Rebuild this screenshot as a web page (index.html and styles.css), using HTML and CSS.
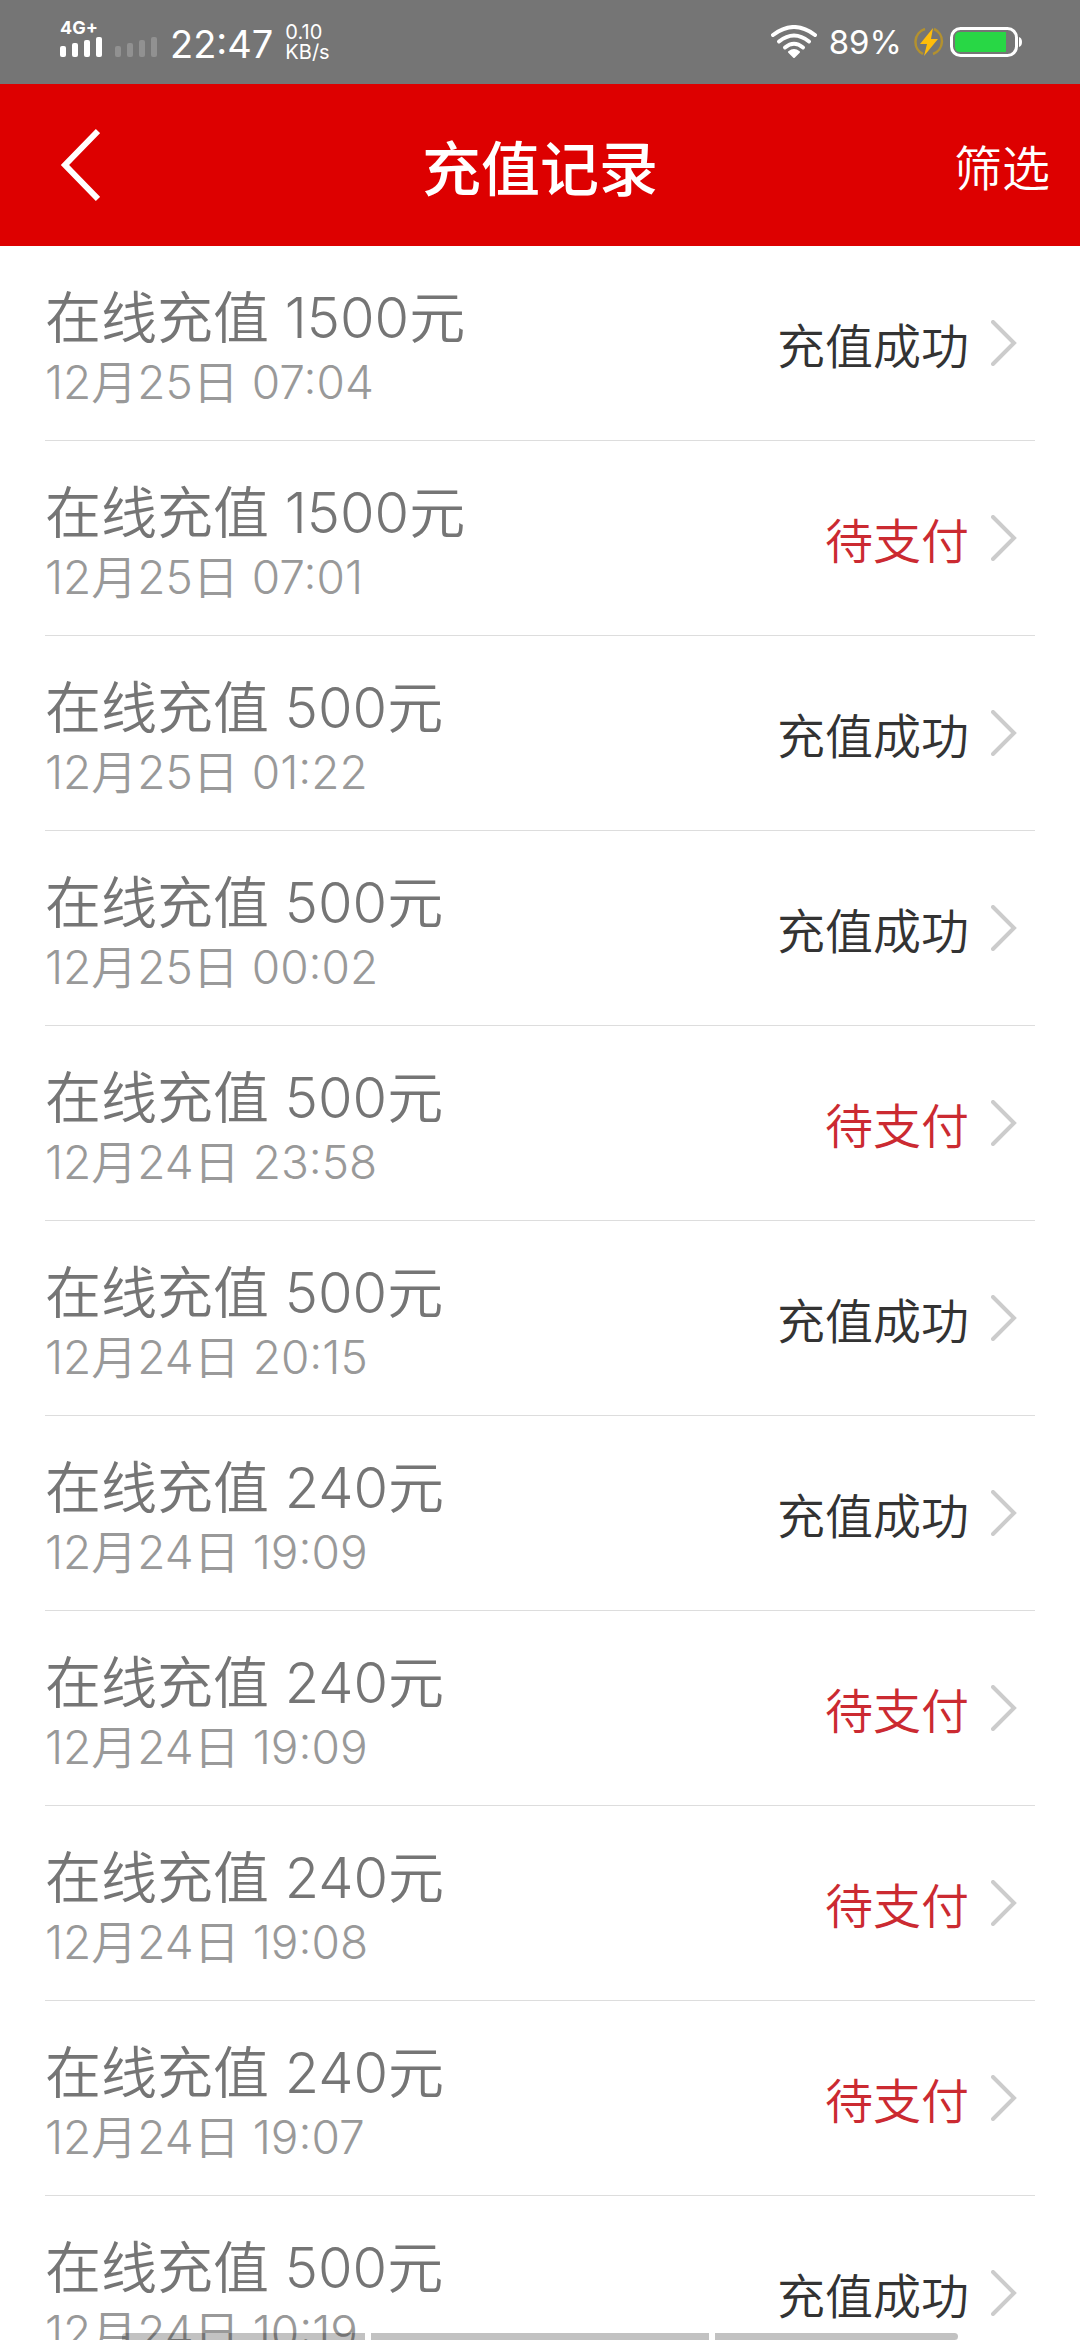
FILE: index.html
```html
<!DOCTYPE html>
<html lang="zh-CN">
<head>
  <meta charset="UTF-8" />
  <meta name="viewport" content="width=device-width, initial-scale=1" />
  <title>充值记录</title>
  <link rel="stylesheet" href="styles.css">
</head>
<body>
  <div class="status-bar">
    <div class="status-left">
      <div class="signal">
        <span class="network">4G+</span>
        <svg width="43" height="21" viewBox="0 0 43 21" fill="#fff">
          <rect x="0" y="10" width="6" height="11" rx="2"/>
          <rect x="12" y="7" width="6" height="14" rx="2"/>
          <rect x="24" y="4" width="6" height="17" rx="2"/>
          <rect x="36" y="1" width="6" height="20" rx="2"/>
        </svg>
      </div>
      <div class="signal">
        <svg width="43" height="21" viewBox="0 0 43 21" fill="#919191">
          <rect x="0" y="10" width="6" height="11" rx="2"/>
          <rect x="12" y="7" width="6" height="14" rx="2"/>
          <rect x="24" y="4" width="6" height="17" rx="2"/>
          <rect x="36" y="1" width="6" height="20" rx="2"/>
        </svg>
      </div>
      <span class="clock">22:47</span>
      <div class="speed"><span>0.10</span><span>KB/s</span></div>
    </div>
    <div class="status-right">
      <svg width="46" height="34" viewBox="0 0 46 34" fill="none" stroke="#fff" stroke-width="4" stroke-linecap="round">
        <path d="M2 10Q23 -6 44 10"/>
        <path d="M8 16.500Q23 4.500 38 16.500"/>
        <path d="M14 22.500Q23 15 32 22.500"/>
        <path d="M18 27Q23 23 28 27L23 32Z" fill="#fff" stroke-width="2" stroke-linejoin="round"/>
      </svg>
      <span class="percent">89%</span>
      <svg class="bolt" width="30" height="30" viewBox="0 0 30 30">
        <path d="M11 2A13.500 13.500 0 0 0 9 27M20 2A13.500 13.500 0 0 1 19 27" fill="none" stroke="#b3912f" stroke-width="2.500"/>
        <path d="M19 1L6 17H13L10 29L24 12H17Z" fill="#ffbd0a"/>
      </svg>
      <svg width="72" height="30" viewBox="0 0 72 30">
        <rect x="1.500" y="1.500" width="65" height="27" rx="9" fill="none" stroke="#fff" stroke-width="3"/>
        <path d="M10 5H56V25H10Q5 25 5 20V10Q5 5 10 5Z" fill="#28d745"/>
        <path d="M69 10Q72 11 72 15T69 20Z" fill="#fff"/>
      </svg>
    </div>
  </div>

  <header class="header">
    <button class="back" type="button" aria-label="返回">
      <svg width="40" height="74" viewBox="0 0 40 74" fill="none" stroke="#fff" stroke-width="6">
        <path d="M38 3L5 37L38 71"/>
      </svg>
    </button>
    <h1>充值记录</h1>
    <button class="filter" type="button">筛选</button>
  </header>

  <ul class="records" id="records"></ul>

  <div class="nav-bars"><span></span><span></span><span></span></div>

  <script>
    const records = [
      ["1500", "12月25日 07:04", true],
      ["1500", "12月25日 07:01", false],
      ["500", "12月25日 01:22", true],
      ["500", "12月25日 00:02", true],
      ["500", "12月24日 23:58", false],
      ["500", "12月24日 20:15", true],
      ["240", "12月24日 19:09", true],
      ["240", "12月24日 19:09", false],
      ["240", "12月24日 19:08", false],
      ["240", "12月24日 19:07", false],
      ["500", "12月24日 10:19", true]
    ];

    document.getElementById('records').innerHTML = records.map(([amount, time, paid]) => `
      <li>
        <a class="record" href="#">
          <div class="info">
            <div class="name">在线充值 ${amount}元</div>
            <div class="time">${time}</div>
          </div>
          <span class="state ${paid ? '' : 'pending'}">${paid ? '充值成功' : '待支付'}</span>
          <svg class="arrow" width="26" height="46" viewBox="0 0 26 46" fill="none" stroke="#ccc" stroke-width="4" stroke-linecap="round">
            <path d="M2 2L23 23L2 44"/>
          </svg>
        </a>
      </li>`).join('');
  </script>
</body>
</html>
```
FILE: styles.css
```css
* {
  box-sizing: border-box;
}

body {
  margin: 0;
  height: 100vh;
  overflow: hidden;
  background: #fff;
  font-family: Inter, "Noto Sans CJK SC", sans-serif;
  font-weight: 350;
}

button {
  border: none;
  background: none;
  padding: 0;
  color: inherit;
  font-family: inherit;
  cursor: pointer;
}

svg {
  display: block;
  flex: none;
}

.status-bar {
  display: flex;
  justify-content: space-between;
  height: 84px;
  padding: 0 60px;
  background: #757575;
  color: #fff;
  font-weight: 400;
}

.status-left,
.status-right {
  display: flex;
  align-items: center;
}

.signal {
  display: flex;
  flex-direction: column;
  justify-content: flex-end;
  height: 84px;
  padding-bottom: 27px;
  margin-right: 12px;
}

.network {
  font-size: 18px;
  line-height: 16px;
  font-weight: 700;
}

.clock {
  font-size: 38px;
  line-height: 48px;
  padding-top: 4px;
}

.speed {
  display: flex;
  flex-direction: column;
  margin-left: 12px;
  font-size: 20px;
  line-height: 20px;
}

.percent {
  margin: 0 12px;
  font-size: 33px;
}

.bolt {
  margin-right: 6px;
}

.status-right {
  margin-right: -2px;
}

.header {
  display: grid;
  grid-template-columns: 1fr auto 1fr;
  align-items: center;
  height: 162px;
  padding: 0 30px 0 60px;
  background: #d00;
  color: #fff;
}

.back {
  justify-self: start;
}

.header h1 {
  margin: 0;
  padding-right: 30px;
  font-size: 59px;
  font-weight: 500;
}

.filter {
  justify-self: end;
  font-size: 48px;
  font-weight: 350;
}

.records {
  margin: 0;
  padding: 0 45px;
  list-style: none;
}

.record {
  display: flex;
  align-items: center;
  height: 195px;
  padding-right: 18px;
  border-bottom: 1px solid #ddd;
  color: #333;
  text-decoration: none;
}

.info {
  flex: 1;
  padding-top: 10px;
}

.name {
  font-size: 56px;
  line-height: 68px;
  color: #757575;
}

.time {
  font-size: 46px;
  line-height: 60px;
  color: #999;
}

.state {
  font-size: 48px;
}

.pending {
  color: #cb2a31;
}

.arrow {
  margin-left: 22px;
}

/* gesture bars over the end of the list */
.nav-bars {
  position: fixed;
  left: 0;
  right: 0;
  bottom: 0;
  display: flex;
  gap: 6px;
  padding: 0 11.3%;
}

.nav-bars span {
  flex: 243;
  height: 7px;
  background: rgba(0, 0, 0, 0.24);
}

.nav-bars span:nth-child(2) {
  flex: 338;
}

.nav-bars span:first-child {
  border-radius: 4px 0 0 0;
}

.nav-bars span:last-child {
  border-radius: 0 4px 4px 0;
}
```
